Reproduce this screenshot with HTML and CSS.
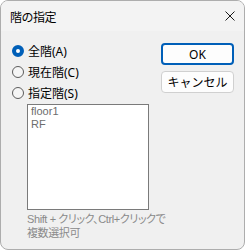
FILE: index.html
```html
<!DOCTYPE html>
<html>
    <head>
        <meta charset="utf-8">
        <link rel="stylesheet" href="styles.css">
    </head>

    <body>
        <div class="dialog">
            <div class="titlebar">
                <span class="title">階の指定</span>
                <svg class="close" width="10" height="10" viewBox="0 0 10 10">
                    <path d="M0.5 0.5 L9.5 9.5 M9.5 0.5 L0.5 9.5" stroke="#1a1a1a" stroke-width="1" fill="none"/>
                </svg>
            </div>

            <div class="content">
                <div class="left">
                    <div class="option"><span class="radio checked"></span>全階(A)</div>
                    <div class="option"><span class="radio"></span>現在階(C)</div>
                    <div class="option"><span class="radio"></span>指定階(S)</div>

                    <div class="listbox">
                        <div class="item">floor1</div>
                        <div class="item">RF</div>
                    </div>

                    <p class="hint">Shift + クリック、Ctrl+クリックで<br>複数選択可</p>
                </div>

                <div class="buttons">
                    <button class="btn btn-default">OK</button>
                    <button class="btn">キャンセル</button>
                </div>
            </div>
        </div>
    </body>
</html>
```

FILE: styles.css
```css
* {
    box-sizing: border-box;
}

body {
    margin: 0;
    padding: 0;
    background-color: #fff;
}

.dialog {
    width: 245px;
    height: 250px;
    border: 1px solid #adadad;
    border-radius: 8px;
    background-color: #f0f0f0;
    overflow: hidden;
    font-family: "Noto Sans", "Noto Sans CJK JP", sans-serif;
    font-size: 12px;
    color: #000;
}

.titlebar {
    height: 30px;
    display: flex;
    align-items: center;
    justify-content: space-between;
    padding: 0 9px;
    background-color: #f3f3f3;
}

.title {
    font-family: "Noto Sans CJK JP", sans-serif;
    font-size: 12px;
    letter-spacing: -0.5px;
}

.content {
    display: flex;
    padding: 9px 0 0 11px;
}

.left {
    width: 137px;
}

.option {
    height: 21px;
    display: flex;
    align-items: center;
    white-space: nowrap;
}

.radio {
    width: 12px;
    height: 12px;
    margin-right: 4px;
    border: 1px solid #5c5c5c;
    border-radius: 50%;
    background-color: #f5f5f5;
}

.radio.checked {
    border: 4px solid #005fb8;
    background-color: #fff;
}

.listbox {
    margin: 1px 0 0 15px;
    width: 122px;
    height: 106px;
    border: 1px solid #7a7a7a;
    background-color: #fff;
    padding: 0 3px;
    font-family: "Liberation Sans", Arial, sans-serif;
    font-size: 11px;
    color: #6d6d6d;
}

.item {
    line-height: 13px;
}

.hint {
    margin: 2px 0 0 15px;
    font-family: "Liberation Sans", "Noto Sans CJK JP", sans-serif;
    font-size: 11px;
    line-height: 14px;
    color: #8a8a8a;
    white-space: nowrap;
    letter-spacing: -0.4px;
    font-feature-settings: "palt";
}

.buttons {
    display: flex;
    flex-direction: column;
    gap: 6px;
    margin: 3px 0 0 12px;
}

.btn {
    width: 73px;
    height: 22px;
    padding: 0;
    border: 1px solid #d0d0d0;
    border-radius: 4px;
    background-color: #fdfdfd;
    font-family: "Noto Sans", "Noto Sans CJK JP", sans-serif;
    font-size: 12px;
    color: #000;
}

.btn-default {
    border: 2px solid #005fb8;
}
```
